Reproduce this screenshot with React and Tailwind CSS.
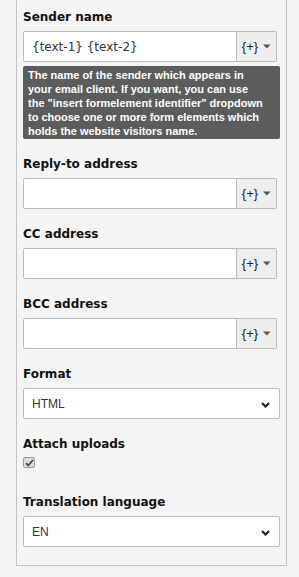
import React from "react";

// Email finisher settings: a column of labelled form fields inside a bordered panel.
function Caret() {
  return (
    <svg width="8" height="5" viewBox="0 0 8 5" className="ml-[5px]">
      <path d="M0 0.5h7.5L3.75 4.5z" fill="#555" />
    </svg>
  );
}

function Chevron() {
  return (
    <svg width="9" height="6" viewBox="0 0 9 6" className="absolute right-[9px] top-[13px]">
      <path d="M1 1l3.5 3.5L8 1" fill="none" stroke="#222" strokeWidth="2.2" />
    </svg>
  );
}

function Label({ children }) {
  return (
    <div className="font-['DejaVu_Sans',sans-serif] font-bold text-[12px] leading-[18px] text-[#111] mb-[5px]">
      {children}
    </div>
  );
}

function InsertField({ label, value, help }) {
  return (
    <div className="mb-[16px]">
      <Label>{label}</Label>
      <div className="flex h-[31px] w-[254px] border border-[#bbb] rounded-[2px] bg-white">
        <div className="flex-1 flex items-center pl-[8px] font-['DejaVu_Sans',sans-serif] text-[12px] text-[#333]">
          {value}
        </div>
        <div className="w-[40px] flex items-center justify-center border-l border-[#bbb] bg-[#eee] font-['Liberation_Sans',sans-serif] text-[13px] text-[#222]">
          {"{+}"}
          <Caret />
        </div>
      </div>
      {help && (
        <div className="mt-[4px] w-[257px] rounded-[2px] bg-[#5c5c5c] px-[5px] pt-[2px] pb-[1px] font-['Liberation_Sans',sans-serif] font-bold text-[11px] leading-[14px] text-white">
          {help.map((line) => (
            <div key={line} className="whitespace-nowrap">
              {line}
            </div>
          ))}
        </div>
      )}
    </div>
  );
}

function SelectField({ label, value }) {
  return (
    <div>
      <Label>{label}</Label>
      <div className="relative flex items-center h-[31px] w-[257px] border border-[#bbb] rounded-[2px] bg-white pl-[8px] font-['Liberation_Sans',sans-serif] text-[12px] text-[#333]">
        {value}
        <Chevron />
      </div>
    </div>
  );
}

export default function App() {
  return (
    <div className="min-h-screen bg-[#f3f3f3] pl-4">
      <div className="w-[271px] border-x border-b border-[#c3c3c3] bg-[#f4f4f4] px-[6px] pt-[8px] pb-[18px]">
        <InsertField
          label="Sender name"
          value="{text-1} {text-2}"
          help={[
            "The name of the sender which appears in",
            "your email client. If you want, you can use",
            'the "insert formelement identifier" dropdown',
            "to choose one or more form elements which",
            "holds the website visitors name.",
          ]}
        />
        <InsertField label="Reply-to address" value="" />
        <InsertField label="CC address" value="" />
        <InsertField label="BCC address" value="" />
        <SelectField label="Format" value="HTML" />
        <div className="mt-[16px]">
          <div className="font-['DejaVu_Sans',sans-serif] font-bold text-[12px] leading-[18px] text-[#111] mb-[4px]">
            Attach uploads
          </div>
          <span className="flex items-center justify-center w-[12px] h-[11px] border border-[#999] rounded-[2px] bg-[#ddd]">
            <svg width="9" height="8" viewBox="0 0 9 8">
              <path d="M1 4.2l2.2 2.3L8 1" fill="none" stroke="#444" strokeWidth="1.8" />
            </svg>
          </span>
        </div>
        <div className="mt-[25px]">
          <SelectField label="Translation language" value="EN" />
        </div>
      </div>
    </div>
  );
}
